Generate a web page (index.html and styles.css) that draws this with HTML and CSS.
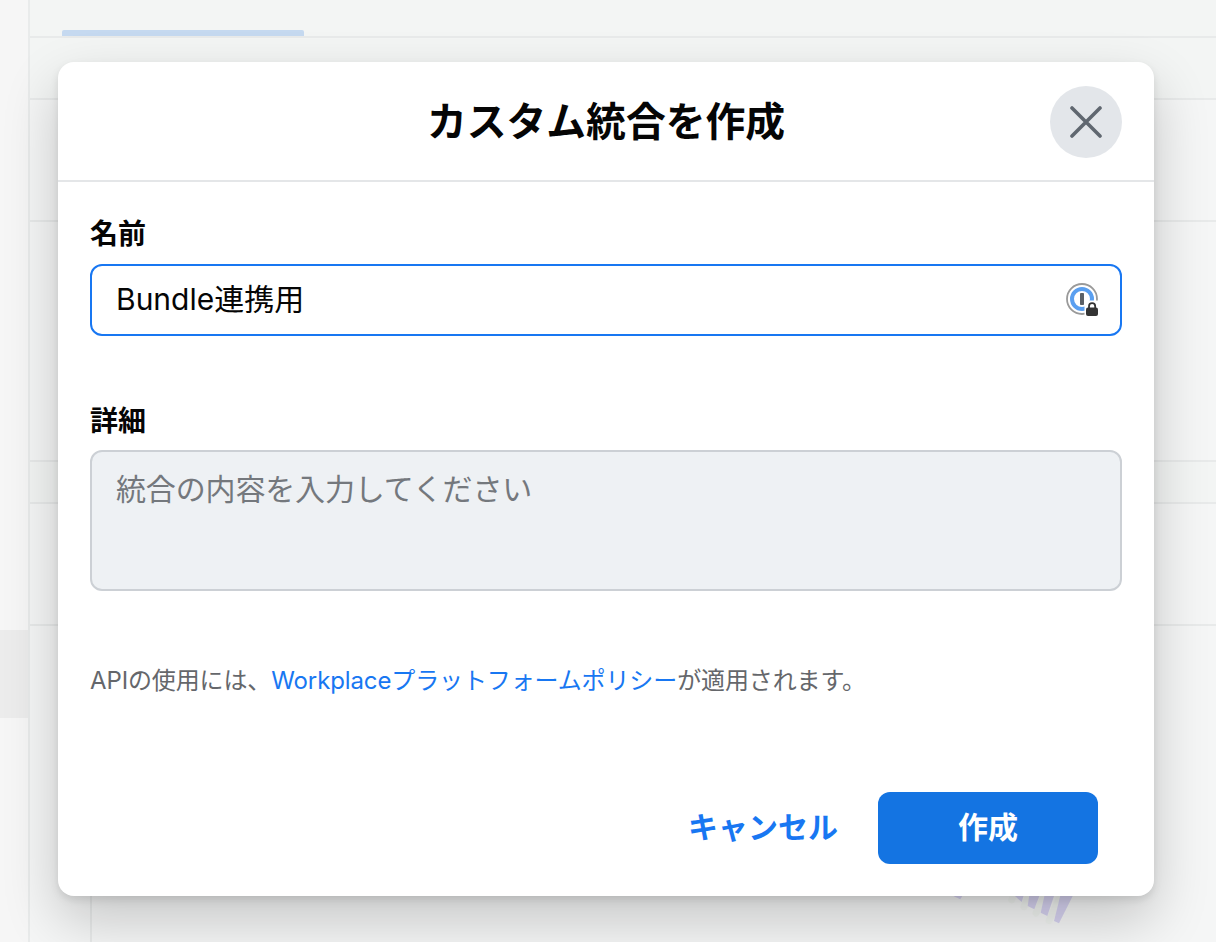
FILE: index.html
```html
<!DOCTYPE html>
<html lang="ja">
<head>
<meta charset="utf-8">
<title>カスタム統合を作成</title>
<link rel="stylesheet" href="styles.css">
</head>
<body>
<div class="page">
  <aside class="rail">
    <div class="rail-top"></div>
    <div class="rail-active"></div>
  </aside>
  <main class="content">
    <div class="tabs"><div class="tab-active"></div></div>
    <div class="row row-62"></div>
    <div class="row row-122"></div>
    <div class="row row-240"></div>
    <div class="row row-42"></div>
    <div class="row row-122b"></div>
    <div class="row-last">
      <svg class="chart" width="140" height="40" viewBox="940 890 140 40">
        <g fill="none" stroke="#f0f3f0" stroke-width="7" stroke-linecap="round">
          <path d="M1011.7 900l2-6"/>
          <path d="M1024 906.7l6-14"/>
          <path d="M1036 913l10-20"/>
          <path d="M1049 920.7l13-28"/>
        </g>
        <g fill="#d6d2f0">
          <path d="M953.3 890h9v6l-2 3.3-7-3.3z"/>
          <path d="M1015 890h8.5v6l-1.800 6-6.700-6z"/>
          <path d="M1030 890h11.300l-2 6-5 13.300-6.600-3.300z"/>
          <path d="M1045.700 890h11.300l-3 6-6.700 20-6.600-3.300z"/>
          <path d="M1061.700 890h14l-3 6-13.700 27.300-5-2.300z"/>
        </g>
      </svg>
    </div>
  </main>
</div>

<section class="modal">
  <header class="modal-head">
    <h1 class="modal-title">カスタム統合を作成</h1>
    <button class="close" type="button" aria-label="閉じる">
      <svg width="32" height="32" viewBox="0 0 32 32"><path d="M2 2l28 28M30 2L2 30" fill="none" stroke="#606770" stroke-width="3.6" stroke-linecap="round"/></svg>
    </button>
  </header>
  <div class="modal-body">
    <div class="field field-name">
      <label class="label label-name">名前</label>
      <div class="input">
        <span class="input-text">Bundle連携用</span>
        <svg class="pw-icon" width="34" height="34" viewBox="0 0 34 34">
          <circle cx="16" cy="16" r="15" fill="#fff" stroke="#9a9a9a" stroke-width="1.800"/>
          <circle cx="16" cy="16" r="10" fill="#fff" stroke="#5a9ff0" stroke-width="4"/>
          <rect x="14" y="10" width="4" height="12" rx="0.800" fill="#5b6066"/>
          <rect x="18.500" y="17.500" width="15.500" height="16.500" rx="3" fill="#fff"/>
          <path d="M23 25v-1.800a3.100 3.100 0 0 1 6.200 0V25" fill="none" stroke="#333" stroke-width="1.800"/>
          <rect x="20" y="24.500" width="12" height="8.500" rx="2" fill="#333"/>
        </svg>
      </div>
    </div>
    <div class="field field-detail">
      <label class="label label-detail">詳細</label>
      <div class="textarea">統合の内容を入力してください</div>
    </div>
    <p class="policy">APIの使用には、<a class="link" href="#">Workplaceプラットフォームポリシー</a>が適用されます。</p>
    <div class="actions">
      <button class="btn-cancel" type="button">キャンセル</button>
      <button class="btn-create" type="button"><span class="btn-label">作成</span></button>
    </div>
  </div>
</section>
</body>
</html>
```
FILE: styles.css
```css
* { box-sizing: border-box; }
html, body { margin: 0; height: 100%; }
body {
  width: 1216px;
  height: 942px;
  overflow: hidden;
  position: relative;
  background: #f5f6f6;
  font-family: Inter, "Noto Sans CJK JP", sans-serif;
  color: #050505;
}
.page { display: flex; height: 942px; }
.rail { width: 30px; flex: none; border-right: 2px solid #e9ebeb; background: #f6f6f6; display: flex; flex-direction: column; }
.rail-top { height: 630px; }
.rail-active { height: 88px; background: #ececec; }
.content { flex: 1; display: flex; flex-direction: column; }
.tabs { height: 38px; flex: none; border-bottom: 2px solid #e8eaea; padding-left: 32px; background: #f3f5f4; display: flex; align-items: flex-end; }
.tab-active { width: 242px; height: 6px; background: #c5d9f0; border-radius: 2px 2px 0 0; }
.row { border-bottom: 2px solid #e8eaea; flex: none; }
.row-62 { height: 62px; background: #f3f5f4; }
.row-122 { height: 122px; background: #f5f6f6; }
.row-240 { height: 240px; background: #f5f6f6; }
.row-42 { height: 42px; background: #f3f5f4; }
.row-122b { height: 122px; background: #f5f6f6; }
.row-last { flex: 1; position: relative; border-left: 2px solid #e8eaea; margin-left: 60px; overflow: hidden; }
.chart { position: absolute; left: 848px; top: 264px; }

.modal {
  position: absolute;
  left: 58px;
  top: 62px;
  width: 1096px;
  height: 834px;
  background: #fff;
  border-radius: 16px;
  box-shadow: 0 24px 56px rgba(0,0,0,.2), 0 4px 8px rgba(0,0,0,.1);
  display: flex;
  flex-direction: column;
}
.modal-head {
  height: 120px;
  flex: none;
  border-bottom: 2px solid #e4e6e8;
  display: flex;
  align-items: center;
  justify-content: center;
  position: relative;
}
.modal-title { margin: 2px 0 0; font-size: 39.800px; font-weight: 700; line-height: 48px; color: #050505; }
.close {
  position: absolute;
  right: 32px;
  top: 24px;
  width: 72px;
  height: 72px;
  border: 0;
  border-radius: 50%;
  background: #e3e6ea;
  display: flex;
  align-items: center;
  justify-content: center;
  padding: 0;
}
.modal-body { flex: 1; padding: 0 32px; display: flex; flex-direction: column; }
.field { display: flex; flex-direction: column; }
.field-name { padding-top: 32px; }
.field-detail { padding-top: 65px; }
.label { font-size: 28px; font-weight: 700; line-height: 40px; color: #050505; }
.label-name { margin-bottom: 10px; }
.label-detail { margin-bottom: 9px; }
.input {
  height: 72px;
  border: 2px solid #1877f2;
  border-radius: 12px;
  padding: 0 20px 0 24px;
  display: flex;
  align-items: center;
  justify-content: space-between;
  background: #fff;
}
.input-text { font-size: 30px; line-height: 40px; color: #050505; margin-top: -2px; }
.pw-icon { flex: none; }
.textarea {
  height: 141px;
  border: 2px solid #ccd0d5;
  border-radius: 12px;
  background: #eef1f4;
  padding: 17px 24px;
  font-size: 30px;
  line-height: 40px;
  letter-spacing: -0.150px;
  color: #74787d;
}
.policy { margin: 72px 0 0; font-size: 24px; line-height: 36px; letter-spacing: -0.120px; color: #65676b; }
.link { color: #1877f2; text-decoration: none; }
.actions { margin-top: 93px; display: flex; justify-content: flex-end; align-items: center; padding-right: 24px; gap: 40px; }
.btn-cancel { border: 0; background: none; padding: 0 0 2px; font: 700 30px/40px Inter, "Noto Sans CJK JP", sans-serif; color: #1877f2; }
.btn-create { width: 220px; height: 72px; border: 0; border-radius: 12px; background: #1474e2; color: #fff; font: 700 30px/40px Inter, "Noto Sans CJK JP", sans-serif; padding: 0 0 2px; }
.btn-label { display: block; }
```
